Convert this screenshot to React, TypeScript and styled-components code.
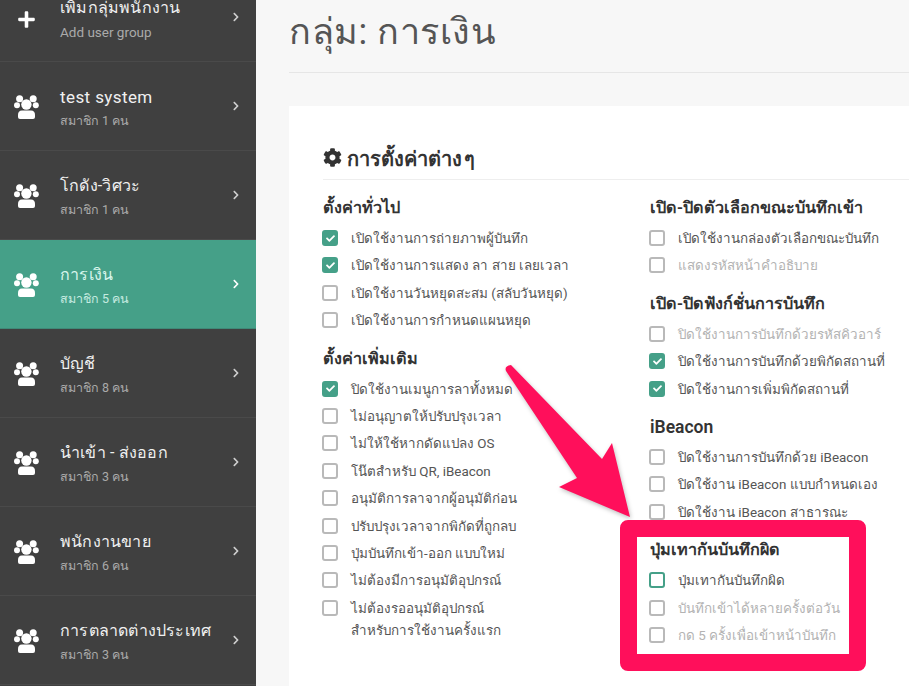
import React from "react";
import styled, { createGlobalStyle } from "styled-components";
import { FaPlus, FaCog, FaChevronRight, FaCheck } from "react-icons/fa";

const Global = createGlobalStyle`
  html, body { margin: 0; padding: 0; background: #f7f7f7; }
  #root { width: 909px; height: 686px; }
  * { box-sizing: border-box; }
`;

const Page = styled.div`
  position: relative;
  display: flex;
  width: 909px;
  height: 686px;
  overflow: hidden;
  font-family: Roboto, "Noto Sans", "Open Sans", sans-serif;
  background: #f7f7f7;
`;

const Sidebar = styled.nav`
  width: 256px;
  flex: none;
  background: #404040;
  margin-top: -27px;
  height: 713px;
`;

const GroupRow = styled.div<{ $active?: boolean }>`
  height: 89px;
  display: flex;
  align-items: center;
  padding: 0 15px 0 14px;
  background: ${(p) => (p.$active ? "#45a088" : "transparent")};
  border-bottom: 1px solid ${(p) => (p.$active ? "#3f8a78" : "#4a4a4a")};
  color: #fff;
`;

const IconSlot = styled.div<{ $plus?: boolean }>`
  width: 46px;
  flex: none;
  display: flex;
  padding-left: ${(p) => (p.$plus ? 3 : 0)}px;
  padding-top: ${(p) => (p.$plus ? 5 : 1)}px;
  font-size: 19px;
  line-height: 0;
`;

const GroupText = styled.div`
  flex: 1;
  padding-top: 4px;
`;

const GroupName = styled.div<{ $active?: boolean; $latin?: boolean }>`
  font-size: ${(p) => (p.$latin ? 17 : 16)}px;
  line-height: 24px;
  letter-spacing: ${(p) => (p.$latin ? 0.4 : 0.2)}px;
  color: ${(p) => (p.$active ? "#d9f5ec" : "#f0f0f0")};
`;

const GroupSub = styled.div<{ $active?: boolean; $latin?: boolean }>`
  font-size: ${(p) => (p.$latin ? 13.5 : 12.5)}px;
  line-height: 20px;
  margin-top: 1.5px;
  color: ${(p) => (p.$active ? "#c5ebe0" : "#aaaaaa")};
`;

const Chevron = styled.div<{ $active?: boolean }>`
  font-size: 10px;
  line-height: 0;
  color: ${(p) => (p.$active ? "#fff" : "#cfcfcf")};
`;

const Main = styled.main`
  flex: 1;
  min-width: 0;
  padding-left: 33px;
`;

const TitleBar = styled.header`
  height: 73px;
  border-bottom: 1px solid #e6e6e6;
  padding-top: 9px;
`;

const Title = styled.h1`
  margin: 0;
  font-size: 36px;
  line-height: 46px;
  font-weight: 400;
  letter-spacing: 0.5px;
  color: #555;
`;

const Card = styled.section`
  margin-top: 33px;
  width: 640px;
  height: 600px;
  background: #fff;
  padding: 38px 0 0 34px;
`;

const CardTitle = styled.h2`
  margin: 0;
  height: 36px;
  width: 586px;
  border-bottom: 1px solid #eeeeee;
  display: flex;
  align-items: flex-start;
  gap: 5px;
  font-size: 20px;
  line-height: 31px;
  font-weight: 700;
  word-spacing: -3px;
  color: #333;
  svg { font-size: 19px; margin-top: 4px; }
`;

const Columns = styled.div`
  display: grid;
  grid-template-columns: 327px 260px;
  margin-top: 15px;
`;

const Column = styled.div`
  display: flex;
  flex-direction: column;
`;

const SectionHead = styled.h3<{ $gap?: number; $latin?: boolean }>`
  margin: ${(p) => p.$gap ?? 0}px 0 2px;
  font-size: ${(p) => (p.$latin ? 17.5 : 16.2)}px;
  line-height: 26px;
  font-weight: 600;
  color: #333;
`;

const OptionRow = styled.div<{ $dim?: boolean }>`
  display: flex;
  align-items: flex-start;
  min-height: 27.4px;
  padding-top: 5px;
  font-size: 13.4px;
  line-height: 22px;
  color: ${(p) => (p.$dim ? "#b3b3b3" : "#555")};
`;

const OptionText = styled.span`
  white-space: pre-line;
`;

const Box = styled.span<{ $checked?: boolean; $focus?: boolean }>`
  width: 16px;
  height: 16px;
  flex: none;
  margin: 2px 13px 0 -1px;
  border-radius: 3px;
  border: 2px solid ${(p) => (p.$checked || p.$focus ? "#45a088" : "#b9b9b9")};
  background: ${(p) => (p.$checked ? "#45a088" : "#fff")};
  color: #fff;
  display: flex;
  align-items: center;
  justify-content: center;
  font-size: 9px;
`;

const Highlight = styled.div`
  position: absolute;
  left: 620px;
  top: 520px;
  width: 246px;
  height: 151px;
  border: 17px solid #ff0f5b;
  border-radius: 8px;
  pointer-events: none;
`;

const Arrow = styled.svg`
  position: absolute;
  left: 500px;
  top: 360px;
  pointer-events: none;
  filter: drop-shadow(1px 2px 2px rgba(0, 0, 0, 0.25));
`;

const UsersIcon = () => (
  <svg width="25" height="24" viewBox="0 0 25 24" fill="currentColor" aria-hidden="true">
    <circle cx="12.4" cy="9.5" r="5.2" />
    <circle cx="5.6" cy="3.7" r="3.5" />
    <circle cx="19.2" cy="3.7" r="3.5" />
    <circle cx="3" cy="10.3" r="3" />
    <circle cx="21.8" cy="10.3" r="3" />
    <path d="M4 20 Q4 15.5 8 15.5 H17 Q21 15.5 21 20 V22 Q21 24 19 24 H6 Q4 24 4 22 Z" />
  </svg>
);

type Opt = { t: string; checked?: boolean; dim?: boolean; focus?: boolean };
type Sec = { head: string; gap?: number; latin?: boolean; items: Opt[] };

const groups = [
  { name: "เพิ่มกลุ่มพนักงาน", sub: "Add user group", plus: true, subLatin: true },
  { name: "test system", sub: "สมาชิก 1 คน", latin: true },
  { name: "โกดัง-วิศวะ", sub: "สมาชิก 1 คน" },
  { name: "การเงิน", sub: "สมาชิก 5 คน", active: true },
  { name: "บัญชี", sub: "สมาชิก 8 คน" },
  { name: "นำเข้า - ส่งออก", sub: "สมาชิก 3 คน" },
  { name: "พนักงานขาย", sub: "สมาชิก 6 คน" },
  { name: "การตลาดต่างประเทศ", sub: "สมาชิก 3 คน" },
];

const left: Sec[] = [
  {
    head: "ตั้งค่าทั่วไป",
    items: [
      { t: "เปิดใช้งานการถ่ายภาพผู้บันทึก", checked: true },
      { t: "เปิดใช้งานการแสดง ลา สาย เลยเวลา", checked: true },
      { t: "เปิดใช้งานวันหยุดสะสม (สลับวันหยุด)" },
      { t: "เปิดใช้งานการกำหนดแผนหยุด" },
    ],
  },
  {
    head: "ตั้งค่าเพิ่มเติม",
    gap: 13,
    items: [
      { t: "ปิดใช้งานเมนูการลาทั้งหมด", checked: true },
      { t: "ไม่อนุญาตให้ปรับปรุงเวลา" },
      { t: "ไม่ให้ใช้หากดัดแปลง OS" },
      { t: "โน๊ตสำหรับ QR, iBeacon" },
      { t: "อนุมัติการลาจากผู้อนุมัติก่อน" },
      { t: "ปรับปรุงเวลาจากพิกัดที่ถูกลบ" },
      { t: "ปุ่มบันทึกเข้า-ออก แบบใหม่" },
      { t: "ไม่ต้องมีการอนุมัติอุปกรณ์" },
      { t: "ไม่ต้องรออนุมัติอุปกรณ์\nสำหรับการใช้งานครั้งแรก" },
    ],
  },
];

const right: Sec[] = [
  {
    head: "เปิด-ปิดตัวเลือกขณะบันทึกเข้า",
    items: [
      { t: "เปิดใช้งานกล่องตัวเลือกขณะบันทึก" },
      { t: "แสดงรหัสหน้าคำอธิบาย", dim: true },
    ],
  },
  {
    head: "เปิด-ปิดฟังก์ชั่นการบันทึก",
    gap: 13,
    items: [
      { t: "ปิดใช้งานการบันทึกด้วยรหัสคิวอาร์", dim: true },
      { t: "ปิดใช้งานการบันทึกด้วยพิกัดสถานที่", checked: true },
      { t: "ปิดใช้งานการเพิ่มพิกัดสถานที่", checked: true },
    ],
  },
  {
    head: "iBeacon",
    gap: 13,
    latin: true,
    items: [
      { t: "ปิดใช้งานการบันทึกด้วย iBeacon" },
      { t: "ปิดใช้งาน iBeacon แบบกำหนดเอง" },
      { t: "ปิดใช้งาน iBeacon สาธารณะ" },
    ],
  },
  {
    head: "ปุ่มเทากันบันทึกผิด",
    gap: 13,
    items: [
      { t: "ปุ่มเทากันบันทึกผิด", focus: true },
      { t: "บันทึกเข้าได้หลายครั้งต่อวัน", dim: true },
      { t: "กด 5 ครั้งเพื่อเข้าหน้าบันทึก", dim: true },
    ],
  },
];

const Sections = ({ data }: { data: Sec[] }) => (
  <Column>
    {data.map((s) => (
      <React.Fragment key={s.head}>
        <SectionHead $gap={s.gap} $latin={s.latin}>{s.head}</SectionHead>
        {s.items.map((o) => (
          <OptionRow key={o.t} $dim={o.dim}>
            <Box $checked={o.checked} $focus={o.focus}>{o.checked && <FaCheck />}</Box>
            <OptionText>{o.t}</OptionText>
          </OptionRow>
        ))}
      </React.Fragment>
    ))}
  </Column>
);

export default function App() {
  return (
    <Page>
      <Global />
      <Sidebar>
        {groups.map((g) => (
          <GroupRow key={g.name} $active={g.active}>
            <IconSlot $plus={g.plus}>{g.plus ? <FaPlus /> : <UsersIcon />}</IconSlot>
            <GroupText>
              <GroupName $active={g.active} $latin={g.latin}>{g.name}</GroupName>
              <GroupSub $active={g.active} $latin={g.subLatin}>{g.sub}</GroupSub>
            </GroupText>
            <Chevron $active={g.active}><FaChevronRight /></Chevron>
          </GroupRow>
        ))}
      </Sidebar>
      <Main>
        <TitleBar>
          <Title>กลุ่ม: การเงิน</Title>
        </TitleBar>
        <Card>
          <CardTitle>
            <FaCog />
            การตั้งค่าต่าง ๆ
          </CardTitle>
          <Columns>
            <Sections data={left} />
            <Sections data={right} />
          </Columns>
        </Card>
      </Main>
      <Arrow width="140" height="165" viewBox="500 360 140 165">
        <path
          d="M506 371 Q504 366 511 365 L602 459 L612 443 L630 517 L559 487 L577 478 Z"
          fill="#ff0f5b"
        />
      </Arrow>
      <Highlight />
    </Page>
  );
}
